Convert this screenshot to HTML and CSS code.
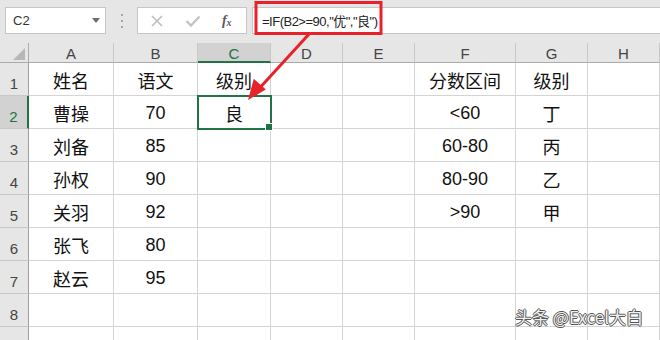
FILE: index.html
```html
<!DOCTYPE html>
<html lang="zh">
<head>
    <meta charset="UTF-8">
    <title>Excel IF</title>
    <link rel="stylesheet" href="styles.css">
</head>
<body>
    <div class="app">
        <div class="toolbar">
            <div class="namebox">
                <span>C2</span>
                <span class="caret"></span>
            </div>
            <div class="grip">
                <svg width="4" height="14" viewBox="0 0 4 14"><rect x="1" y="0" width="2" height="2" fill="#a6a6a6"/><rect x="1" y="6" width="2" height="2" fill="#a6a6a6"/><rect x="1" y="12" width="2" height="2" fill="#a6a6a6"/></svg>
            </div>
            <div class="fbtns">
                <svg width="14" height="14" viewBox="0 0 14 14"><path d="M2 2 L12 12 M12 2 L2 12" stroke="#bdbdbd" stroke-width="1.6" fill="none"/></svg>
                <svg width="16" height="14" viewBox="0 0 16 14"><path d="M1.5 7 L6 11.5 L14.5 2.5" stroke="#c4c4c4" stroke-width="2.4" fill="none"/></svg>
                <span class="fx">f<sub>x</sub></span>
            </div>
            <div class="formula">=IF(B2&gt;=90,"优","良")</div>
        </div>

        <div class="sheet">
            <div class="corner"><span class="tri"></span></div>
            <div class="ch">A</div>
            <div class="ch">B</div>
            <div class="ch active">C</div>
            <div class="ch">D</div>
            <div class="ch">E</div>
            <div class="ch">F</div>
            <div class="ch">G</div>
            <div class="ch">H</div>

            <div class="rh">1</div>
            <div class="c">姓名</div><div class="c">语文</div><div class="c">级别</div><div class="c"></div><div class="c"></div><div class="c">分数区间</div><div class="c">级别</div><div class="c"></div>

            <div class="rh active">2</div>
            <div class="c">曹操</div><div class="c">70</div><div class="c selected">良</div><div class="c"></div><div class="c"></div><div class="c">&lt;60</div><div class="c">丁</div><div class="c"></div>

            <div class="rh">3</div>
            <div class="c">刘备</div><div class="c">85</div><div class="c"></div><div class="c"></div><div class="c"></div><div class="c">60-80</div><div class="c">丙</div><div class="c"></div>

            <div class="rh">4</div>
            <div class="c">孙权</div><div class="c">90</div><div class="c"></div><div class="c"></div><div class="c"></div><div class="c">80-90</div><div class="c">乙</div><div class="c"></div>

            <div class="rh">5</div>
            <div class="c">关羽</div><div class="c">92</div><div class="c"></div><div class="c"></div><div class="c"></div><div class="c">&gt;90</div><div class="c">甲</div><div class="c"></div>

            <div class="rh">6</div>
            <div class="c">张飞</div><div class="c">80</div><div class="c"></div><div class="c"></div><div class="c"></div><div class="c"></div><div class="c"></div><div class="c"></div>

            <div class="rh">7</div>
            <div class="c">赵云</div><div class="c">95</div><div class="c"></div><div class="c"></div><div class="c"></div><div class="c"></div><div class="c"></div><div class="c"></div>

            <div class="rh">8</div>
            <div class="c"></div><div class="c"></div><div class="c"></div><div class="c"></div><div class="c"></div><div class="c"></div><div class="c"></div><div class="c"></div>

            <div class="rh"></div>
            <div class="c"></div><div class="c"></div><div class="c"></div><div class="c"></div><div class="c"></div><div class="c"></div><div class="c"></div><div class="c"></div>
        </div>

        <!-- red callout over the formula -->
        <svg class="callout" width="660" height="340" viewBox="0 0 660 340">
            <rect x="256" y="2.5" width="125" height="31" fill="none" stroke="#e8222b" stroke-width="3"/>
            <line x1="310" y1="33" x2="256" y2="92" stroke="#e8222b" stroke-width="3"/>
            <polygon points="248,100 265.8,89.6 253.8,78.8" fill="#e8222b"/>
        </svg>

        <div class="watermark">头条 @Excel大白</div>
    </div>
</body>
</html>
```

FILE: styles.css
```css
* {
    margin: 0;
    padding: 0;
    box-sizing: border-box;
}

body {
    width: 660px;
    height: 340px;
    overflow: hidden;
    font-family: "Liberation Sans", "Noto Sans CJK SC", sans-serif;
    background: #fff;
}

.app {
    position: relative;
    width: 660px;
    height: 340px;
    overflow: hidden;
}

/* Formula bar */
.toolbar {
    height: 43px;
    background: #e6e6e6;
    display: flex;
    align-items: flex-start;
    padding-top: 7px;
    padding-left: 5px;
}

.namebox {
    width: 101px;
    height: 27px;
    background: #fff;
    border: 1px solid #c6c6c6;
    display: flex;
    align-items: center;
    justify-content: space-between;
    padding: 0 5px 0 7px;
    font-size: 13px;
    color: #333;
}

.caret {
    width: 0;
    height: 0;
    border-left: 4px solid transparent;
    border-right: 4px solid transparent;
    border-top: 5px solid #6d6d6d;
}

.grip {
    width: 31px;
    height: 27px;
    display: flex;
    align-items: center;
    justify-content: center;
}

.fbtns {
    width: 110px;
    height: 27px;
    background: #fff;
    border: 1px solid #c6c6c6;
    display: flex;
    align-items: center;
    justify-content: space-around;
    padding: 0 4px 0 2px;
}

.fx {
    font-family: "Liberation Serif", serif;
    font-style: italic;
    font-weight: bold;
    font-size: 14px;
    color: #5a5a5a;
}

.fx sub {
    font-size: 10px;
    vertical-align: -1px;
}

.formula {
    flex: 1;
    height: 27px;
    margin-left: 5px;
    background: #fff;
    border: 1px solid #c6c6c6;
    border-right: none;
    display: flex;
    align-items: center;
    padding-left: 9px;
    font-size: 13px;
    letter-spacing: -0.5px;
    color: #222;
}

/* Grid */
.sheet {
    display: grid;
    grid-template-columns: 29px 85px 84px 73px 72px 72px 101px 72px 72px;
    grid-template-rows: 20px repeat(9, 33px);
}

.corner {
    background: #e6e6e6;
    border-right: 1px solid #ababab;
    border-bottom: 1px solid #ababab;
    display: flex;
    align-items: flex-end;
    justify-content: flex-end;
    padding: 0 3px 2px 0;
}

.tri {
    width: 0;
    height: 0;
    border-left: 12px solid transparent;
    border-bottom: 12px solid #b7b7b7;
}

.ch {
    background: #e6e6e6;
    border-right: 1px solid #c8c8c8;
    border-bottom: 1px solid #ababab;
    display: flex;
    align-items: center;
    justify-content: center;
    font-size: 15px;
    color: #444;
    padding-top: 2px;
}

.ch.active {
    background: #d2d2d2;
    color: #217346;
    border-bottom: 2px solid #217346;
}

.rh {
    background: #e6e6e6;
    border-right: 1px solid #9e9e9e;
    border-bottom: 1px solid #c8c8c8;
    display: flex;
    align-items: flex-end;
    justify-content: center;
    font-size: 15px;
    color: #444;
    padding-bottom: 3px;
}

.rh.active {
    background: #d2d2d2;
    color: #217346;
    border-right: 2px solid #217346;
}

.c {
    border-right: 1px solid #d4d4d4;
    border-bottom: 1px solid #d4d4d4;
    display: flex;
    align-items: center;
    justify-content: center;
    font-size: 18px;
    color: #111;
    padding-top: 2px;
}

.c.selected {
    position: relative;
    outline: 2px solid #217346;
    outline-offset: -1px;
}

.c.selected::after {
    content: "";
    position: absolute;
    right: -3px;
    bottom: -3px;
    width: 6px;
    height: 6px;
    background: #217346;
    border: 1px solid #fff;
}

/* Overlays */
.callout {
    position: absolute;
    left: 0;
    top: 0;
    pointer-events: none;
}

.watermark {
    position: absolute;
    left: 515px;
    top: 305px;
    font-family: "Noto Sans CJK SC", "Liberation Sans", sans-serif;
    font-size: 17px;
    line-height: 24px;
    color: #f2f2f2;
    text-shadow: 1px 0 0 #555, -1px 0 0 #555, 0 1px 0 #555, 0 -1px 0 #555;
}
```
